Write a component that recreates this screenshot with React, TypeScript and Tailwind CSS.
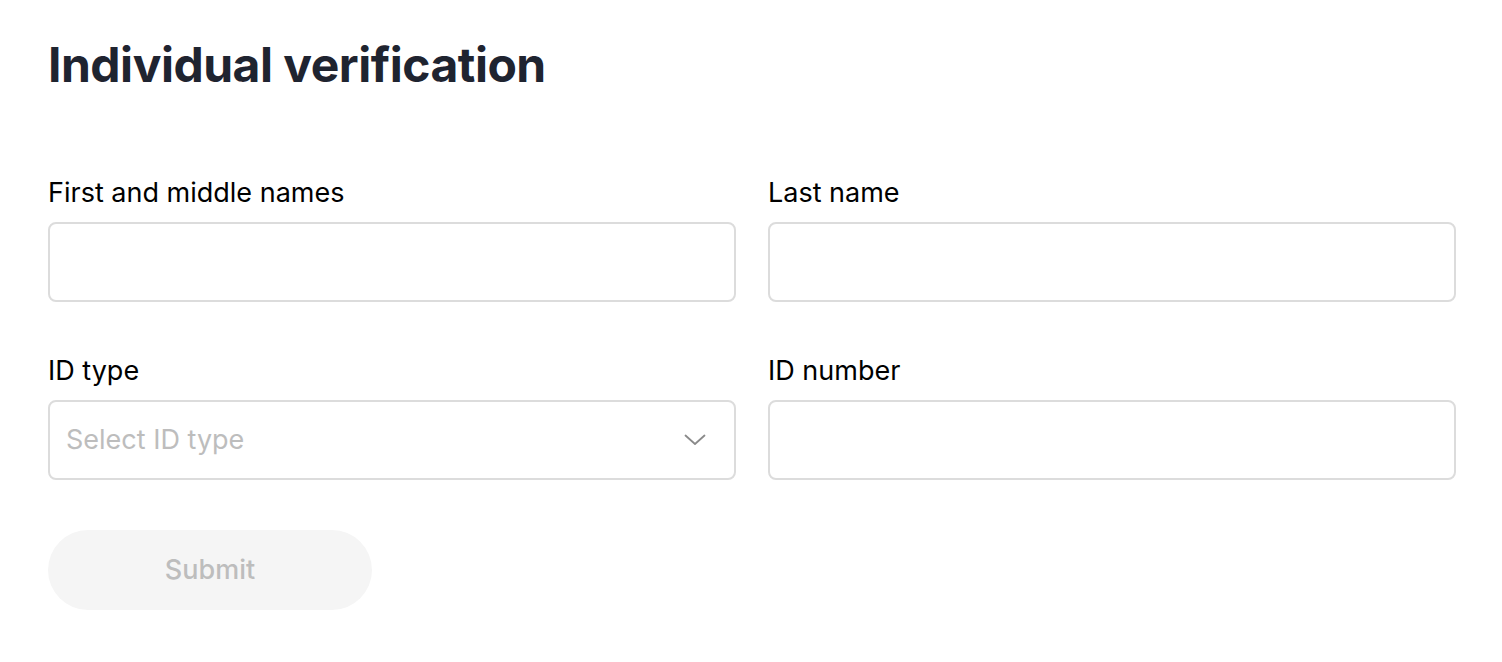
import React from "react";

const font = { fontFamily: "Inter, 'Noto Sans', sans-serif" };

function Field({ label, children }: { label: string; children?: React.ReactNode }) {
  return (
    <div className="flex flex-col">
      <label className="text-[27px] leading-[30px] text-black mb-[14px]">{label}</label>
      {children ?? (
        <input className="h-[80px] w-full rounded-[8px] border-2 border-[#dcdcdc] bg-white px-4 outline-none" />
      )}
    </div>
  );
}

export default function App() {
  return (
    <div className="min-h-[662px] bg-white px-[48px] pt-[35px]" style={font}>
      <h1 className="text-[48px] leading-[60px] font-bold text-[#1f2430] tracking-[-0.5px]">Individual verification</h1>
      <div className="mt-[83px] grid w-[1408px] grid-cols-2 gap-x-[32px] gap-y-[54px]">
        <Field label="First and middle names" />
        <Field label="Last name" />
        <Field label="ID type">
          <div className="flex h-[80px] w-full items-center justify-between rounded-[8px] border-2 border-[#dcdcdc] bg-white pl-[16px] pr-[28px]">
            <span className="text-[27px] text-[#bdbdbd]">Select ID type</span>
            <svg width="22" height="12" viewBox="0 0 22 12" fill="none">
              <path d="M1.5 1.5 L11 10 L20.5 1.5" stroke="#8a8a8a" strokeWidth="1.8" strokeLinecap="round" strokeLinejoin="round" />
            </svg>
          </div>
        </Field>
        <Field label="ID number" />
      </div>
      <button className="mt-[50px] h-[80px] w-[324px] rounded-full bg-[#f5f5f5] text-[27px] font-medium text-[#bdbdbd]">
        Submit
      </button>
    </div>
  );
}
